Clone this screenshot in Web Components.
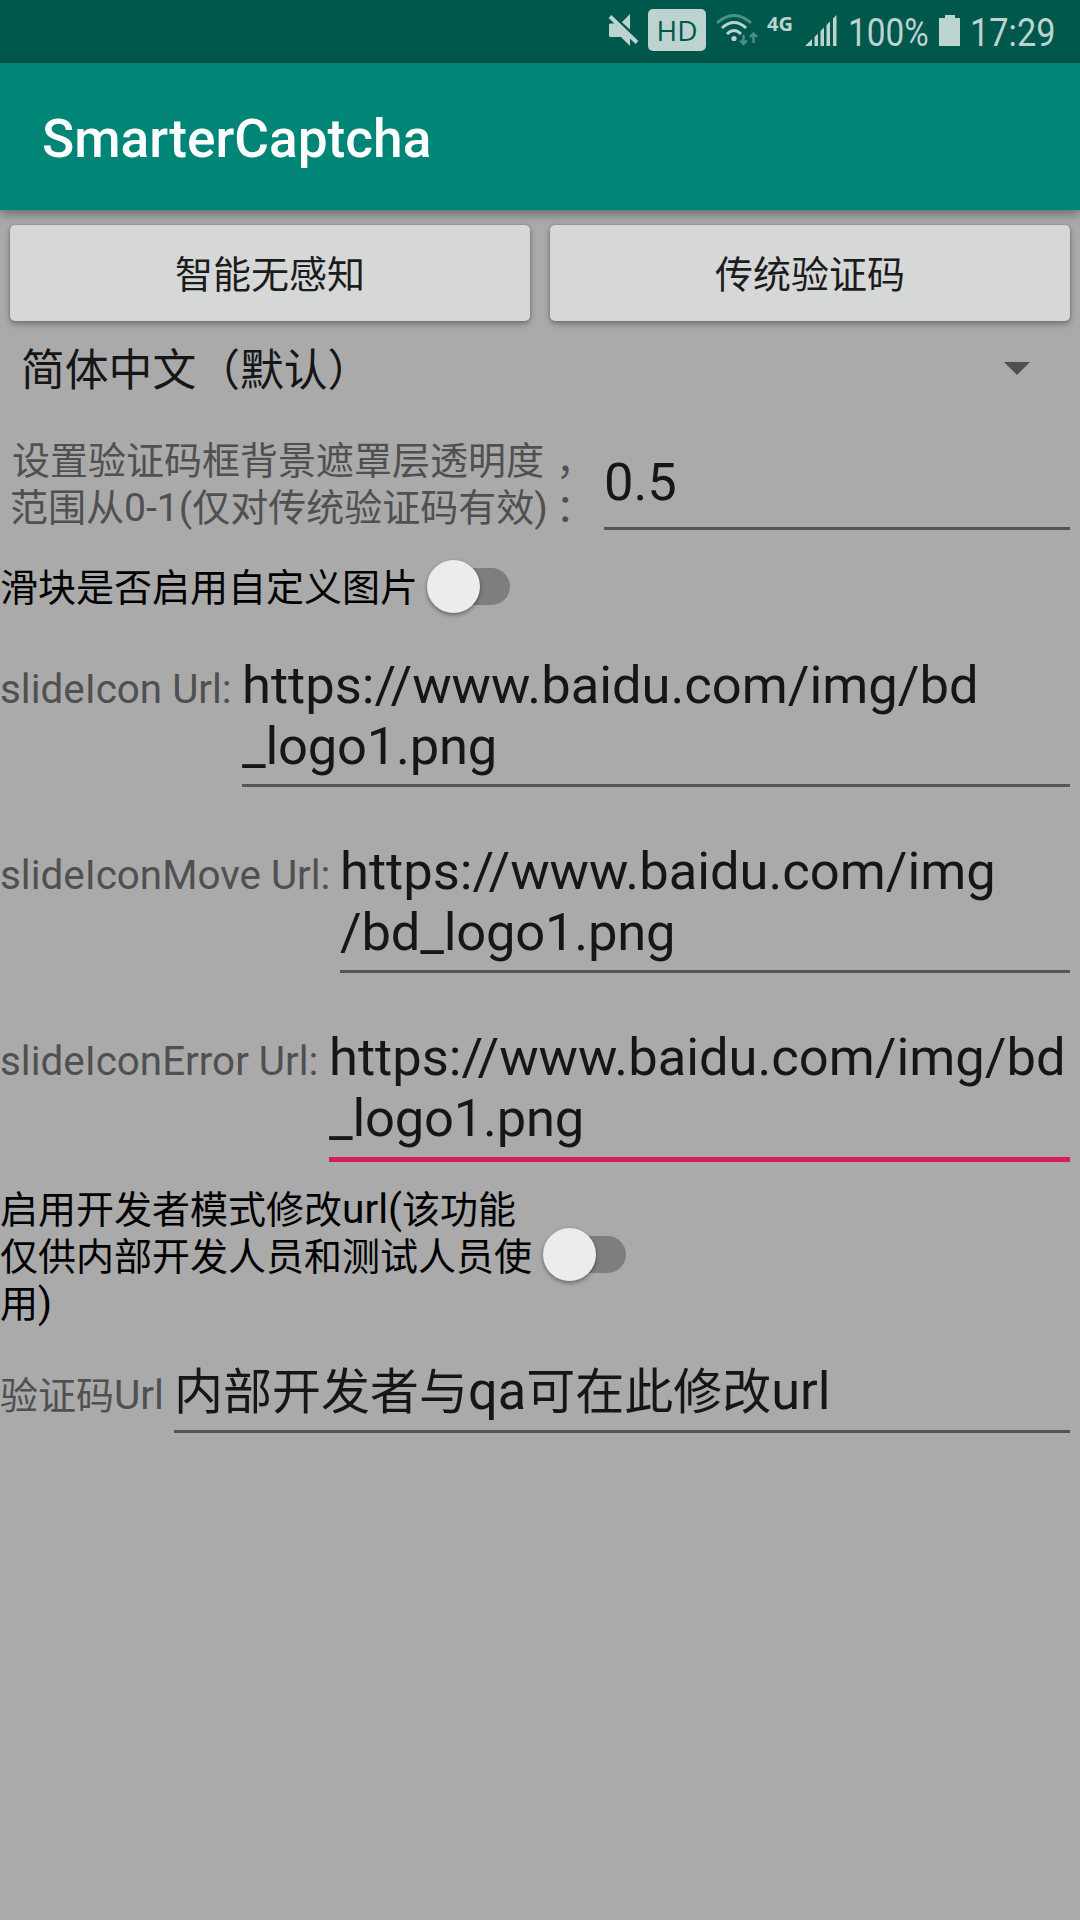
<!DOCTYPE html>
<html lang="zh-CN">
<head>
<meta charset="utf-8">
<title>SmarterCaptcha</title>
<style>
  html, body { margin: 0; background: #aaaaaa; }
  body { width: 1080px; height: 1920px; overflow: hidden; font-family: Roboto, "Noto Sans CJK SC", sans-serif; color: #161616; }
</style>
</head>
<body>
<captcha-demo></captcha-demo>
<script>
const define = (name, html) => customElements.define(name, class extends HTMLElement {
  constructor() {
    super();
    const t = document.createElement('template');
    t.innerHTML = html;
    this.attachShadow({ mode: 'open' }).appendChild(t.content.cloneNode(true));
  }
});

define('status-bar', `
<style>
  :host { display: flex; height: 63px; background: #00574b; color: #bcd3cf; box-sizing: border-box; padding-left: 608px; align-items: flex-start; }
  svg { display: block; flex: none; }
  span { display: block; white-space: nowrap; transform-origin: 0 0; flex: none; }
  .hd { box-sizing: border-box; width: 58px; height: 42px; margin: 9px 0 0 9px; border-radius: 5px; background: #bcd3cf; color: #00574b; font: 28px/42px "Open Sans", sans-serif; text-align: center; }
  .g { font: 700 20px/20px "Open Sans", sans-serif; margin: 14px 0 0 9px; width: 26px; }
  .pct, .time { font: 39px/46px Roboto, sans-serif; margin-top: 10px; transform: scaleX(.855); }
  .pct { width: 85px; margin-left: 9px; }
  .time { width: 90px; margin-left: 9px; transform: scaleX(.88); }
</style>
<svg width="31" height="34" viewBox="0 0 31 34" style="margin-top:14px" fill="#bcd3cf"><path d="M1 11Q1 9.500 2.500 9.500H7L22 23V32l-9-9H2.500Q1 23 1 21.500zM13 9l9-9v18z"/><path d="M4 1L31 26" stroke="#00574b" stroke-width="3"/><path d="M2 2.500L29 28.500" stroke="#bcd3cf" stroke-width="4"/></svg>
<span class="hd">HD</span>
<svg width="42" height="34" viewBox="0 0 42 34" style="margin:14px 0 0 10px" fill="none" stroke="#bcd3cf" stroke-width="3"><path d="M1 9Q18-6 35 9" stroke="#4d8e85"/><path d="M6 14Q18 3 30 14M11 20Q18 13 25 20"/><circle cx="18" cy="24.500" r="2.600" fill="#bcd3cf" stroke="none"/><path d="M27.500 21v9M24 26.500l3.500 3.500l3.500-3.500M37.500 29v-9M34 23l3.500-3.500l3.500 3.500" stroke="#4d8e85" stroke-width="2.400"/></svg>
<span class="g">4G</span>
<svg width="34" height="34" viewBox="0 0 34 34" style="margin:14px 0 0 12px" fill="#bcd3cf"><path d="M0 32L7 25v7zM9.500 23l3.500-3.500V32H9.500zM15.500 17l3.500-3.500V32h-3.500zM21.500 11L25 7.500V32h-3.500zM28 4.500L31.500 1v31H28z"/></svg>
<span class="pct">100%</span>
<svg width="22" height="32" viewBox="0 0 22 32" style="margin:14px 0 0 6px" fill="#bcd3cf"><path d="M6 1h10v3h5v28H0V4h6z"/></svg>
<span class="time">17:29</span>
`);

define('app-bar', `
<style>
  :host { display: flex; align-items: center; height: 147px; padding-left: 42px; box-sizing: border-box; background: #008577; color: #fff; font: 500 53.200px/64px Roboto, sans-serif; box-shadow: 0 4px 10px rgba(0,0,0,.38); position: relative; z-index: 1; }
  div { padding-top: 5px; }
</style><div><slot></slot></div>`);

define('raised-button', `
<style>
  :host { display: flex; flex: 1; height: 96px; align-items: center; justify-content: center; border-radius: 5px; background: #d6d8d7; color: #1c1c1c; font-size: 38px; line-height: 46px; box-shadow: 0 3px 6px rgba(0,0,0,.32), 0 0 3px rgba(0,0,0,.2); }
  span { padding-top: 4px; }
</style><span><slot></slot></span>`);

define('spinner-select', `
<style>
  :host { display: flex; height: 93px; align-items: center; justify-content: space-between; padding: 0 50px 0 21px; font-size: 43.800px; line-height: 52px; }
  span { padding-top: 6px; }
  svg { display: block; margin-top: 2px; }
</style><span><slot></slot></span>
<svg width="26" height="13" viewBox="0 0 26 13"><path d="M0 0h26L13 13z" fill="#505050"/></svg>`);

define('edit-field', `
<style>
  :host { display: block; flex: 1; border-bottom: 3px solid #555555; font-size: 52.500px; line-height: 61px; padding-bottom: 7px; white-space: nowrap; }
  :host([focused]) { border-bottom: 5px solid #d81b60; padding-bottom: 8px; }
</style><slot></slot>`);

define('form-row', `
<style>
  :host { display: flex; align-items: baseline; padding-right: 10px; box-sizing: border-box; }
  .label { display: block; flex: none; color: #505050; font-size: 38px; line-height: 47px; white-space: nowrap; }
</style><div class="label"><slot name="label"></slot></div><slot></slot>`);

define('switch-row', `
<style>
  :host { display: flex; align-items: center; color: #000; font-size: 38px; line-height: 47px; white-space: nowrap; }
  .track { flex: none; width: 73px; height: 37px; border-radius: 19px; background: #7e7e7e; margin-left: 19px; display: flex; align-items: center; }
  .thumb { flex: none; width: 53px; height: 53px; border-radius: 50%; background: #ececec; margin-left: -10px; box-shadow: 0 2px 4px rgba(0,0,0,.4); }
</style><div><slot></slot></div><div class="track"><div class="thumb"></div></div>`);

define('captcha-demo', `
<style>
  :host { display: block; }
  .buttons { display: flex; gap: 20px; padding: 15px 10px 0; }
  i { font-style: normal; font-size: 1.068em; line-height: 1px; }
  b { font-weight: 400; letter-spacing: -.2px; }
  .mask { height: 126px; align-items: flex-start; }
  .mask-label { box-sizing: border-box; width: 604px; padding-left: 10px; padding-top: 24px; }
  .mask-label i { font-size: 1.03em; }
  .mask edit-field { margin-top: 38px; padding-bottom: 14px; }
  .url { height: 186px; padding-top: 21px; }
  .url.last { height: 176px; }
  .url span { display: block; font-size: 40.400px; }
  .dev { display: block; width: 534px; padding-top: 5px; margin-bottom: -1px; }
</style>
<status-bar></status-bar>
<app-bar>SmarterCaptcha</app-bar>
<div class="buttons"><raised-button>智能无感知</raised-button><raised-button>传统验证码</raised-button></div>
<spinner-select>简体中文（默认）</spinner-select>
<form-row class="mask">
  <div slot="label" class="mask-label"><span style="padding-left:2px">设置验证码框背景遮罩层透明度<span style="padding-left:12px">，</span></span><br>范围从<i>0-1(</i>仅对传统验证码有效<i>)</i><span style="padding-left:8px">：</span></div>
  <edit-field>0.5</edit-field>
</form-row>
<switch-row style="height:93px;margin-bottom:1px"><span style="display:block;padding-top:4px">滑块是否启用自定义图片</span></switch-row>
<form-row class="url"><span slot="label" style="width:242px">slideIcon Url:</span><edit-field>https://www.baidu.com/img/bd<br><b>_logo1.png</b></edit-field></form-row>
<form-row class="url"><span slot="label" style="width:340px">slideIconMove Url:</span><edit-field>https://www.baidu.com/img<br><b>/bd_logo1.png</b></edit-field></form-row>
<form-row class="url last"><span slot="label" style="width:329px">slideIconError Url:</span><edit-field focused>https://www.baidu.com/img/bd<br><b>_logo1.png</b></edit-field></form-row>
<switch-row style="height:145px"><span class="dev">启用开发者模式修改<i>url(</i>该功能<br>仅供内部开发人员和测试人员使<br>用<i>)</i></span></switch-row>
<form-row style="padding-top:35px"><span slot="label" style="display:block;width:174px">验证码<i>Url</i></span><edit-field style="font-size:49px">内部开发者与<i>qa</i>可在此修改<i>url</i></edit-field></form-row>
`);
</script>
</body>
</html>
